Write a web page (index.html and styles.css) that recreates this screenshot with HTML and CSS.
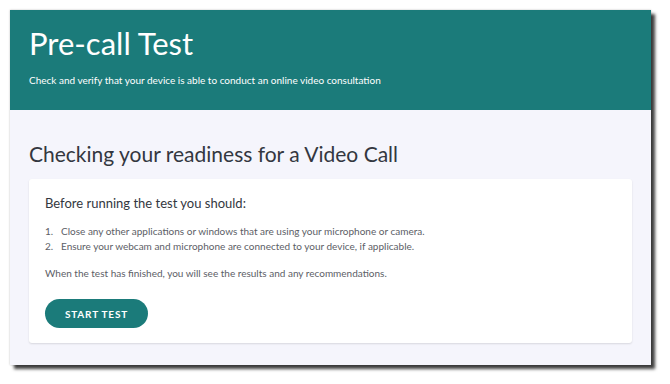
FILE: index.html
```html
<!DOCTYPE html>
<html lang="en">
<head>
<meta charset="utf-8">
<title>Pre-call Test</title>
<link rel="stylesheet" href="styles.css">
</head>
<body>
<div class="window">
  <header class="hero">
    <h1 class="hero-title">Pre-call Test</h1>
    <p class="hero-sub">Check and verify that your device is able to conduct an online video consultation</p>
  </header>
  <main class="content">
    <h2 class="section-title">Checking your readiness for a Video Call</h2>
    <section class="card">
      <h3 class="card-title">Before running the test you should:</h3>
      <ol class="steps">
        <li>Close any other applications or windows that are using your microphone or camera.</li>
        <li>Ensure your webcam and microphone are connected to your device, if applicable.</li>
      </ol>
      <p class="note">When the test has finished, you will see the results and any recommendations.</p>
      <button class="btn">START TEST</button>
    </section>
  </main>
</div>
</body>
</html>
```

FILE: styles.css
```css
html, body {
  margin: 0;
  padding: 0;
  background: #ffffff;
}
body {
  font-family: Lato, "Open Sans", sans-serif;
  padding: 10px 0 0 10px;
  min-height: 384px;
  box-sizing: border-box;
}
.window {
  width: 641px;
  height: 355px;
  background: #f5f5fc;
  box-shadow: 0 0 2px rgba(0,0,0,0.25), 4px 4px 3px rgba(0,0,0,0.75);
  overflow: hidden;
}
.hero {
  background: #1b7b7a;
  height: 100px;
  padding: 0 19px;
  box-sizing: border-box;
  color: #ffffff;
  display: flex;
  flex-direction: column;
}
.hero-title {
  margin: 14px 0 0 0;
  font-size: 31px;
  font-weight: 400;
  line-height: 38px;
}
.hero-sub {
  margin: 11px 0 0 0;
  font-size: 10px;
  line-height: 14px;
}
.content {
  padding: 32px 19px 0 19px;
}
.section-title {
  margin: 0;
  font-size: 21px;
  font-weight: 400;
  color: #333740;
  line-height: 24px;
}
.card {
  margin-top: 13px;
  width: 603px;
  height: 164px;
  box-sizing: border-box;
  background: #ffffff;
  border-radius: 3px;
  box-shadow: 0 1px 2px rgba(0,0,0,0.12);
  padding: 14px 16px;
}
.card-title {
  margin: 0;
  font-size: 13px;
  font-weight: 400;
  color: #333740;
  line-height: 20px;
}
.steps {
  margin: 11px 0 0 0;
  padding: 0;
  list-style: none;
  counter-reset: step;
  font-size: 10px;
  line-height: 15px;
  color: #5c6066;
}
.steps li {
  counter-increment: step;
  display: flex;
}
.steps li::before {
  content: counter(step) ".";
  width: 16px;
  flex: none;
}
.note {
  margin: 12px 0 0 0;
  font-size: 10px;
  line-height: 15px;
  color: #5c6066;
}
.btn {
  margin-top: 18px;
  width: 103px;
  height: 29px;
  border: none;
  border-radius: 15px;
  background: #1b7b7a;
  color: #ffffff;
  font-family: Lato, sans-serif;
  font-size: 10px;
  font-weight: 700;
  letter-spacing: 0.8px;
  padding: 0;
}
```
